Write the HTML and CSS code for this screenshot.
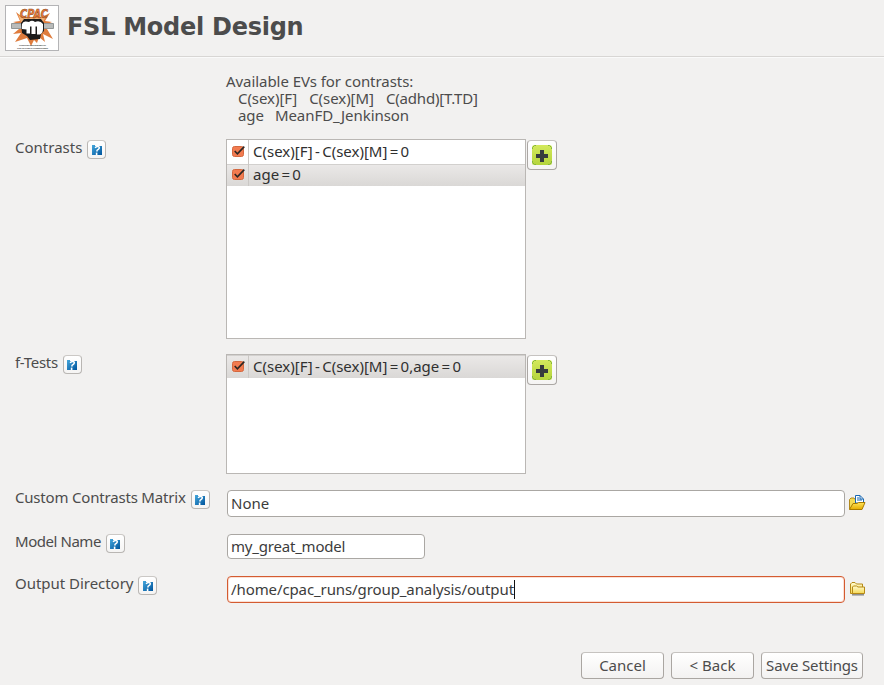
FILE: index.html
```html
<!DOCTYPE html>
<html lang="en">
<head>
<meta charset="utf-8">
<title>FSL Model Design</title>
<link rel="stylesheet" href="styles.css">
</head>
<body>
<svg class="defs" width="0" height="0" aria-hidden="true">
  <defs>
    <linearGradient id="blue" x2="1" y2="1"><stop stop-color="#45a7dc"/><stop offset="1" stop-color="#00549c"/></linearGradient>
    <linearGradient id="green" x2="0" y2="1"><stop stop-color="#d3e95c"/><stop offset="1" stop-color="#b4d43c"/></linearGradient>
    <linearGradient id="gold" x2="0" y2="1"><stop stop-color="#ffe45a"/><stop offset="1" stop-color="#e6ac00"/></linearGradient>
    <linearGradient id="pale" x2="0" y2="1"><stop stop-color="#fffbd0"/><stop offset="1" stop-color="#f5d956"/></linearGradient>
    <symbol id="help" viewBox="0 0 10 10"><path d="M0 0H3V1H10V10H0Z" fill="url(#blue)"/><path d="M3 0H6V1H3Z" fill="#fff"/><path d="M3.2 3Q3.8 1.6 5.6 1.6Q7.8 1.6 7.2 3.3Q6.8 4.4 5.2 5.2L4.7 6.6" fill="none" stroke="#fff" stroke-width="1.5"/><path d="M3.8 7.6H5.4V10H3.8Z" fill="#fff"/></symbol>
    <symbol id="plus" viewBox="0 0 20 20"><rect width="20" height="20" rx="2.5" fill="url(#green)"/><path d="M.5 4V2.5L2.5 .5H4M16 .5H17.5L19.5 2.5V4M.5 16V17.5L2.5 19.5H4M16 19.5H17.5L19.5 17.5V16" fill="none" stroke="#83b53c"/><path d="M8 5H12V9H16V13H12V17H8V13H4V9H8Z" fill="#363b3d"/></symbol>
    <symbol id="check" viewBox="0 0 14 13"><rect x=".5" y="1.5" width="11" height="10" rx="2" fill="#f27b50" stroke="#d4683f"/><path d="M2.7 6L5.4 8.8L12.3 1.6" fill="none" stroke="#2c2724" stroke-width="1.6"/></symbol>
  </defs>
</svg>
<header class="header">
  <svg class="logo" viewBox="0 0 54 46">
    <rect x=".5" y=".5" width="53" height="45" fill="#fff" stroke="#b4b4b6"/>
    <path d="M11 7L17 12L37 12L45 8L40 16L47 17L42 19V24L48 34L38 29L40 37L34 32L32 38L29 35L26 41L22 33L10 37L16 28L8 29L14 24V19L8 17L15 16Z" fill="#df7c3d"/>
    <path d="M13 10L18 13H36L42 10L38 17H16Z" fill="#f3b276"/>
    <path d="M6.500 18.500H48.500V23.500H6.500Z" fill="#b9bbba" stroke="#929696"/>
    <path d="M16 18L19 14L36 14L39 18V26L36 29L35 34L25 35L22 31L17 28Z" fill="#1c1b1b"/>
    <path d="M17 19Q18 16 21 16.500L24 17Q27 14.500 30 17Q35 15 38 19V24Q38 28 35 29.500H32V21.500H30.500V29H26.500V21.500H25V28.500H21.500V24.500L17 24Z" fill="#fff"/>
    <text class="logo-name" x="15" y="13" textLength="28" lengthAdjust="spacingAndGlyphs">CPAC</text>
    <text class="logo-note" x="14" y="41" textLength="27">CONFIGURABLE PIPELINE FOR</text>
    <text class="logo-note" x="12" y="43.5" textLength="31">THE ANALYSIS OF CONNECTOMES</text>
  </svg>
  <h1 class="title">FSL Model Design</h1>
</header>
<main class="form">
  <div class="evs">
    <div class="evs-title">Available EVs for contrasts:</div>
    <div class="ev-line"><span>C(sex)[F]</span><span>C(sex)[M]</span><span class="ev-adhd">C(adhd)[T.TD]</span></div>
    <div class="ev-line"><span class="ev-age">age</span><span>MeanFD_Jenkinson</span></div>
  </div>
  <div class="row row-contrasts">
    <div class="label"><span class="t-contrasts">Contrasts</span><button class="help"><svg><use href="#help"/></svg></button></div>
    <div class="list">
      <div class="item"><span class="tick"><svg><use href="#check"/></svg></span><span class="t-item">C(sex)[F] - C(sex)[M] = 0</span></div>
      <div class="item selected"><span class="tick"><svg><use href="#check"/></svg></span><span class="t-item">age = 0</span></div>
    </div>
    <button class="add"><svg><use href="#plus"/></svg></button>
  </div>
  <div class="row row-ftests">
    <div class="label"><span class="t-ftests">f-Tests</span><button class="help"><svg><use href="#help"/></svg></button></div>
    <div class="list">
      <div class="item selected first"><span class="tick"><svg><use href="#check"/></svg></span><span class="t-item">C(sex)[F] - C(sex)[M] = 0,age = 0</span></div>
    </div>
    <button class="add"><svg><use href="#plus"/></svg></button>
  </div>
  <div class="row row-custom">
    <div class="label"><span class="t-custom">Custom Contrasts Matrix</span><button class="help"><svg><use href="#help"/></svg></button></div>
    <div class="field"><span>None</span></div>
    <svg class="folder" viewBox="0 0 18 17"><path d="M1.5 15V5.5L3 4H6L7 5.5H13V15Z" fill="#f5dc54" stroke="#b2891c"/><path d="M7.5 1.5H12L15.5 5V9H7.5Z" fill="#fff" stroke="#1767b2"/><path d="M9 4H11M9 6H14M12 1.500V5H15" stroke="#1767b2" fill="none"/><path d="M1.5 15.5L5 9.5H9L10.5 8.5H17L14 15.5Z" fill="url(#gold)" stroke="#a97b00"/></svg>
  </div>
  <div class="row row-model">
    <div class="label"><span class="t-model">Model Name</span><button class="help"><svg><use href="#help"/></svg></button></div>
    <div class="field short"><span class="t-great">my_great_model</span></div>
  </div>
  <div class="row row-output">
    <div class="label"><span class="t-output">Output Directory</span><button class="help"><svg><use href="#help"/></svg></button></div>
    <div class="field focused"><span class="t-path">/home/cpac_runs/group_analysis/output</span><i class="caret"></i></div>
    <svg class="folder" viewBox="0 0 18 17"><path d="M4 14.8H16" stroke="#8b8b89" stroke-width="1.5"/><path d="M2.5 13.5V4L4 2.5H7L8.5 4H14.5V13.5Z" fill="url(#pale)" stroke="#b78a16"/><path d="M4.5 13.5V7L5.5 6H8.5L10 7H16.5V13.5Z" fill="url(#pale)" stroke="#b78a16"/></svg>
  </div>
</main>
<footer class="actions">
  <button class="action"><span class="t-cancel">Cancel</span></button>
  <button class="action"><span class="t-back">&lt; Back</span></button>
  <button class="action save"><span class="t-save">Save Settings</span></button>
</footer>
</body>
</html>
```
FILE: styles.css
```css
* { box-sizing: border-box; }
body {
  margin: 0;
  width: 884px;
  height: 685px;
  overflow: hidden;
  display: flex;
  flex-direction: column;
  background: #f2f1f0;
  color: #4c4c4c;
  font: 15px/17px "Noto Sans", "Open Sans", sans-serif;
}
.defs { position: absolute; }
button { padding: 0; margin: 0; font: inherit; color: inherit; }
svg { display: block; }
span { white-space: pre; }

.header {
  height: 57px;
  flex: none;
  display: flex;
  align-items: flex-start;
  padding: 5px 0 0 5px;
  border-bottom: 1px solid #d8d6d4;
  box-shadow: 0 1px #fafafa;
}
.logo { width: 54px; height: 46px; }
.logo-name { font: italic bold 12px "DejaVu Sans", sans-serif; fill: #ee7c36; stroke: #7a4322; stroke-width: .5px; }
.logo-note { font: bold 2.4px "Liberation Sans", sans-serif; fill: #555; }
.title { margin: 7px 0 0 8px; font: bold 24px/30px "DejaVu Sans", sans-serif; letter-spacing: -.27px; }

.form { padding: 16px 0 0 15px; }
.evs { margin-left: 211px; height: 66px; letter-spacing: -.06px; }
.ev-line { display: flex; gap: 12px; padding-left: 12px; }
.ev-age { margin-right: -1px; }
.ev-adhd { letter-spacing: -.18px; }
.row { display: flex; align-items: flex-start; }
.row-contrasts { height: 215px; }
.row-ftests { height: 136px; }
.row-custom { height: 44px; }
.row-model { height: 42px; }
.label { width: 211px; display: flex; gap: 5px; height: 20px; line-height: 16px; }
.help {
  width: 19px;
  height: 19px;
  margin-top: 1px;
  display: flex;
  align-items: center;
  justify-content: center;
  border: 1px solid #b9b6b3;
  border-top-color: #cbc8c5;
  border-radius: 4px;
  background: linear-gradient(#fff, #f5f4f3);
}
.help svg { width: 10px; height: 10px; }
.row-custom .label, .row-model .label, .row-output .label { margin-top: -1px; }
.t-ftests { letter-spacing: -.3px; }
.t-custom { letter-spacing: -.19px; }
.t-model { letter-spacing: -.45px; }
.t-output { letter-spacing: -.03px; }
.t-great { letter-spacing: -.2px; }
.t-path { letter-spacing: -.1px; }
.t-save { letter-spacing: -.15px; }

.list { width: 300px; height: 200px; background: #fff; border: 1px solid #bab7b4; }
.row-ftests .list { height: 120px; }
.item { display: flex; align-items: center; height: 24px; color: #303030; }
.item.selected { height: 22px; background: linear-gradient(#ebe9e8, #dad8d6); box-shadow: inset 0 1px #d2d0ce; }
.item.first { height: 23px; }
.tick { width: 22px; align-self: stretch; display: flex; align-items: center; padding: 0 0 1px 5px; border-right: 1px solid #cbc8c5; }
.tick svg { width: 14px; height: 13px; }
.t-item { margin: 0 0 2px 4px; word-spacing: -1.6px; }
.item.first .t-item { margin-bottom: 0; }
.item.first .tick { padding-bottom: 0; }
.add {
  width: 30px;
  height: 30px;
  margin: 1px 0 0 1px;
  display: flex;
  align-items: center;
  justify-content: center;
  border: 1px solid #aba7a4;
  border-top-color: #c6c3c0;
  border-radius: 4px;
  background: linear-gradient(#fff, #f5f4f3);
}
.add svg { width: 20px; height: 20px; }

.field {
  width: 618px;
  height: 27px;
  margin-left: 1px;
  display: flex;
  align-items: center;
  padding: 0 0 1px 3px;
  color: #3c3c3c;
  background: #fff;
  border: 1px solid #aaa7a3;
  border-radius: 4px;
}
.field.short { width: 198px; height: 25px; }
.field.focused { border-color: #d45b31; box-shadow: inset 0 0 0 1px #fae0d5; }
.caret { width: 1px; height: 19px; margin-top: 1px; background: #111; }
.folder { width: 18px; height: 17px; margin: 4px 0 0 3px; }

.actions { display: flex; gap: 7px; margin: auto 0 6px 581px; }
.action {
  width: 83px;
  height: 27px;
  border: 1px solid #aaa6a2;
  border-top-color: #c6c3c0;
  border-radius: 4px;
  background: linear-gradient(#fff, #f3f2f1);
}
.action.save { width: 102px; }
```
